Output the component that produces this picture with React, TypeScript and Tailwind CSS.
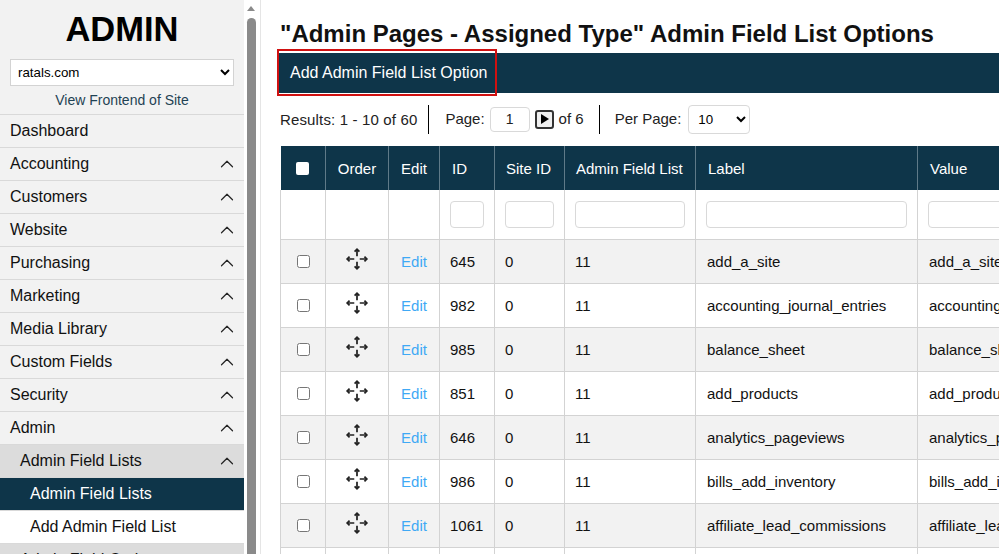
import { ChevronUp } from "lucide-react";

const navItems = ["Accounting", "Customers", "Website", "Purchasing", "Marketing", "Media Library", "Custom Fields", "Security", "Admin"];

const rows = [
  ["645", "add_a_site"],
  ["982", "accounting_journal_entries"],
  ["985", "balance_sheet"],
  ["851", "add_products"],
  ["646", "analytics_pageviews"],
  ["986", "bills_add_inventory"],
  ["1061", "affiliate_lead_commissions"],
  ["", ""],
];

const columns = ["w-[45px]", "w-[63px]", "w-[51px]", "w-[55px]", "w-[70px]", "w-[131px]", "w-[222px]", "w-[300px]"];

function MoveIcon() {
  return (
    <svg viewBox="0 0 22 22" className="mx-auto block h-[24px] w-[24px] -translate-y-[2px] text-[#222]" fill="none" stroke="currentColor" strokeWidth="1.6">
      <path d="M11 2v6.5M11 13.5V20M2 11h6.5M13.5 11H20" />
      <path d="M8.8 4.2 11 2l2.2 2.2M8.8 17.8 11 20l2.2-2.2M4.2 8.8 2 11l2.2 2.2M17.8 8.8 20 11l-2.2 2.2" />
    </svg>
  );
}

function NavRow({ label, className = "", chevron = true }: { label: string; className?: string; chevron?: boolean }) {
  return (
    <div className={`flex h-[33px] items-center justify-between border-b border-[#d9d9d9] pr-[6px] ${className}`}>
      <span>{label}</span>
      {chevron && <ChevronUp size={22} strokeWidth={1.3} className="text-[#222]" />}
    </div>
  );
}

function Sidebar() {
  return (
    <aside className="h-full w-[244px] shrink-0 overflow-hidden bg-[#f2f2f2] text-[16px] text-[#111]">
      <h1 className="pt-[8px] text-center text-[34.5px] font-bold leading-[42px] text-black">ADMIN</h1>
      <div className="px-[10px] pt-[9px]">
        <select className="h-[27px] w-full border border-[#d3d3d3] bg-white pl-[3px] text-[13.33px] text-black">
          <option>ratals.com</option>
        </select>
      </div>
      <div className="pt-[4px] text-center text-[14px] leading-[20px] text-[#1f4254]">View Frontend of Site</div>
      <div className="mt-[4px] border-t border-[#d9d9d9]">
        <NavRow label="Dashboard" chevron={false} className="pl-[10px]" />
        {navItems.map((item) => (
          <NavRow key={item} label={item} className="pl-[10px]" />
        ))}
        <NavRow label="Admin Field Lists" className="bg-[#dcdcdc] pl-[20px]" />
        <NavRow label="Admin Field Lists" chevron={false} className="border-[#0e3549] bg-[#0e3549] pl-[30px] text-white" />
        <NavRow label="Add Admin Field List" chevron={false} className="bg-white pl-[30px]" />
        <NavRow label="Admin Field Options" className="bg-[#dcdcdc] pl-[20px]" />
      </div>
    </aside>
  );
}

function Scrollbar() {
  return (
    <div className="flex h-full w-[16px] shrink-0 flex-col items-start bg-white pl-[3px]">
      <div className="mt-[6px] h-0 w-0 border-x-[4.5px] border-b-[5px] border-x-transparent border-b-[#8a8a8a]" />
      <div className="mt-[7px] w-[9px] flex-1 rounded-t-[5px] bg-[#8a8a8a]" />
    </div>
  );
}

function Toolbar() {
  return (
    <div className="-ml-px mt-[5px] flex h-[40px] w-[721px] items-center bg-[#0e3549] text-[16px] text-white">
      <div className="relative flex h-full items-center pl-[11px] pr-[8px]">
        Add Admin Field List Option
        <span className="absolute -inset-x-[2px] -bottom-[3px] -top-[4px] border-2 border-[#d01111]" />
      </div>
    </div>
  );
}

function Pagination() {
  return (
    <div className="mt-[11px] flex h-[30px] items-center text-[15px] text-[#222]">
      <span className="mt-[2px] tracking-[0.15px]">Results: 1 - 10 of 60</span>
      <span className="ml-[11px] h-[29px] w-px bg-black" />
      <span className="ml-[16px]">Page:</span>
      <input defaultValue="1" className="ml-[5px] h-[25px] w-[40px] rounded-[4px] border border-[#d9d9d9] text-center text-[14px]" />
      <span className="ml-[5px] flex h-[19px] w-[19px] items-center justify-center rounded-[3px] border-2 border-[#333] bg-[#f0f0f0]">
        <span className="ml-[2px] h-0 w-0 border-y-[5px] border-l-[8px] border-y-transparent border-l-black" />
      </span>
      <span className="ml-[5px]">of 6</span>
      <span className="ml-[15px] h-[29px] w-px bg-black" />
      <span className="ml-[15px]">Per Page:</span>
      <select defaultValue="10" className="ml-[7px] h-[29px] w-[62px] rounded-[4px] border border-[#d9d9d9] bg-white pl-[5px] text-[13.33px] text-black">
        <option>10</option>
      </select>
    </div>
  );
}

function DataTable() {
  const th = "border-l border-[#5f7a88] px-[11px] pt-[2px] text-left font-normal first:border-l-0";
  const td = "border-l border-[#d3d3d3] px-[10px]";
  const text = `${td} pt-[2px]`;
  const wide = "border-l border-[#d3d3d3] pl-[11px] pr-[10px] pt-[2px]";
  return (
    <table className="mt-[12px] w-[937px] table-fixed border-collapse text-[15px] text-[#111]">
      <colgroup>
        {columns.map((c, i) => (
          <col key={i} className={c} />
        ))}
      </colgroup>
      <thead>
        <tr className="h-[44px] bg-[#0e3549] text-white">
          <th className={th}>
            <span className="mx-auto block h-[13px] w-[13px] -translate-y-px rounded-[2px] bg-white" />
          </th>
          <th className={`${th} !text-center`}>Order</th>
          <th className={`${th} !text-center`}>Edit</th>
          <th className={`${th} !pl-[12px]`}>ID</th>
          <th className={th}>Site ID</th>
          <th className={th}>Admin Field List</th>
          <th className={`${th} !pl-[12px]`}>Label</th>
          <th className={`${th} !pl-[12px]`}>Value</th>
        </tr>
      </thead>
      <tbody>
        <tr className="h-[49px] border-b border-[#d3d3d3]">
          <td className={td} />
          <td className={td} />
          <td className={td} />
          {columns.slice(3).map((_, i) => (
            <td key={i} className={td}>
              <input className="block h-[27px] w-full rounded-[4px] border border-[#d9d9d9]" />
            </td>
          ))}
        </tr>
        {rows.map(([id, label], i) => (
          <tr key={i} className={`h-[44px] border-b border-[#d3d3d3] ${i % 2 === 0 ? "bg-[#f2f2f2]" : "bg-white"}`}>
            <td className={td}>
              {id && <input type="checkbox" className="mx-auto block h-[13px] w-[13px]" />}
            </td>
            <td className={td}>{id && <MoveIcon />}</td>
            <td className={`${text} text-center text-[#3fa9f5]`}>{id && "Edit"}</td>
            <td className={text}>{id}</td>
            <td className={text}>{id && "0"}</td>
            <td className={text}>{id && "11"}</td>
            <td className={wide}>{label}</td>
            <td className={`${wide} whitespace-nowrap`}>{label}</td>
          </tr>
        ))}
      </tbody>
    </table>
  );
}

export default function App() {
  return (
    <div className="flex h-[554px] w-[999px] overflow-hidden bg-white font-['Liberation_Sans',Arial,sans-serif]">
      <Sidebar />
      <Scrollbar />
      <main className="min-w-0 flex-1 overflow-hidden border-l border-[#e5e5e5] pl-[19px]">
        <h2 className="pt-[20px] text-[24px] font-bold leading-[28px] whitespace-nowrap text-[#111]">"Admin Pages - Assigned Type" Admin Field List Options</h2>
        <Toolbar />
        <Pagination />
        <DataTable />
      </main>
    </div>
  );
}
